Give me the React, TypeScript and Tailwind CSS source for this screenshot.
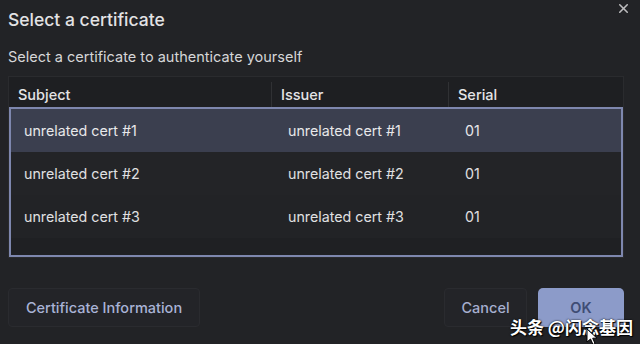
import { X } from "lucide-react";

const rows = [
  { subject: "unrelated cert #1", issuer: "unrelated cert #1", serial: "01" },
  { subject: "unrelated cert #2", issuer: "unrelated cert #2", serial: "01" },
  { subject: "unrelated cert #3", issuer: "unrelated cert #3", serial: "01" },
];

export default function App() {
  return (
    <div
      className="relative w-[640px] h-[344px] overflow-hidden bg-[#222326] text-[#e2e2e4]"
      style={{ fontFamily: "Inter, 'Liberation Sans', sans-serif" }}
    >
      <button className="absolute right-[9px] top-[1px] text-[#bdbdbf]">
        <X size={15} strokeWidth={2.5} />
      </button>

      <div className="flex flex-col px-2 pt-[9px]">
        <h1 className="text-[17.5px] font-medium leading-[22px]">Select a certificate</h1>
        <p className="mt-[17px] text-[14.5px] leading-[18px] text-[#d6d6d8]">
          Select a certificate to authenticate yourself
        </p>

        {/* table */}
        <div className="mt-[10px] w-[616px] bg-[#1e1f22] border border-[#2a2b2e]">
          <div className="flex h-[30px] items-center pt-[5px] text-[14.5px] font-medium text-[#e4e4e6]">
            <div className="w-[263px] h-full flex items-center pl-[9px] border-r border-[#303134]">Subject</div>
            <div className="w-[177px] h-full flex items-center pl-[9px] border-r border-[#303134]">Issuer</div>
            <div className="flex-1 pl-[9px]">Serial</div>
          </div>
          <div className="h-[150px] border-2 border-[#7e87ae] bg-[#1f2023]">
            {rows.map((r, i) => (
              <div
                key={i}
                className={
                  "flex h-[43px] items-center text-[14.25px] " +
                  (i === 0 ? "bg-[#3b3f4f] text-[#e8e8ea]" : i === 1 ? "bg-[#232427] text-[#e0e0e2]" : "bg-[#222326] text-[#e0e0e2]")
                }
              >
                <div className="w-[263px] pl-[13px]">{r.subject}</div>
                <div className="w-[177px] pl-[14px]">{r.issuer}</div>
                <div className="flex-1 pl-[14px]">{r.serial}</div>
              </div>
            ))}
          </div>
        </div>

        {/* footer */}
        <div className="mt-[30px] flex w-[616px] items-center">
          <button className="h-[39px] w-[192px] rounded-[4px] border border-[#2a2b2f] bg-[#232428] text-[14.5px] font-medium text-[#a9b3d6]">
            Certificate Information
          </button>
          <div className="ml-auto flex gap-[11px]">
            <button className="h-[39px] w-[83px] rounded-[4px] border border-[#2a2b2f] bg-[#232428] text-[14.5px] font-medium text-[#a6afcf]">
              Cancel
            </button>
            <button className="h-[39px] w-[86px] rounded-[5px] bg-[#8c9bc9] text-[14.5px] font-semibold text-[#3f4d75]">
              OK
            </button>
          </div>
        </div>
      </div>

      {/* watermark */}
      <div
        className="absolute left-[510px] top-[314px] text-[17px] font-bold text-white"
        style={{
          fontFamily: "'Noto Sans CJK SC', sans-serif",
          textShadow: "0 0 2px #000, 1px 1px 1px #000",
        }}
      >
        头条 @闪念基因
      </div>
      <svg className="absolute left-[586px] top-[328px]" width="14" height="18" viewBox="0 0 14 18">
        <path d="M1 1 L1 14 L4.5 11 L7 16.5 L9 15.5 L6.7 10.2 L11 10.2 Z" fill="#fff" stroke="#000" strokeWidth="1" />
      </svg>
    </div>
  );
}
